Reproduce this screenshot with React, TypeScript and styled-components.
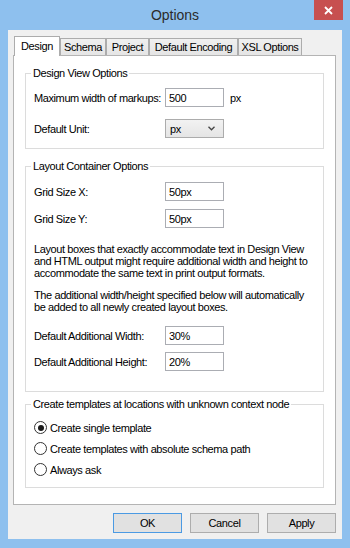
import styled, { createGlobalStyle } from 'styled-components'

const GlobalStyle = createGlobalStyle`
  body {
    margin: 0;
    background: #8ec0ee;
  }
  * {
    box-sizing: border-box;
  }
`

const FONT = `"Liberation Sans", Arial, sans-serif`

const Window = styled.div`
  width: 350px;
  height: 548px;
  display: flex;
  flex-direction: column;
  padding: 0 8px 9px;
  background: #8ec0ee;
  font-family: ${FONT};
  font-size: 11px;
  letter-spacing: -0.4px;
  color: #000;
`

const TitleBar = styled.div`
  height: 30px;
  display: grid;
  grid-template-columns: 1fr auto 1fr;
`

const Title = styled.div`
  grid-column: 2;
  font-size: 14px;
  letter-spacing: 0;
  line-height: 30px;
  color: #2b2b2b;
`

const CloseButton = styled.div`
  grid-column: 3;
  justify-self: end;
  width: 29px;
  height: 20px;
  margin-right: -1px;
  background: #c75050;
  display: flex;
  align-items: center;
  justify-content: center;
`

const Client = styled.div`
  flex: 1;
  display: flex;
  flex-direction: column;
  background: #f0f0f0;
  padding: 6px 6px 6px 5px;
`

const TabStrip = styled.div`
  display: flex;
  align-items: flex-end;
  height: 19px;
  padding-left: 1px;
  position: relative;
  z-index: 1;
`

const Tab = styled.div<{ $active?: boolean; $w: number }>`
  width: ${({ $w }) => $w}px;
  height: ${({ $active }) => ($active ? 20 : 17)}px;
  margin-bottom: ${({ $active }) => ($active ? -1 : 0)}px;
  padding-bottom: ${({ $active }) => ($active ? 2 : 0)}px;
  border: 1px solid #acacac;
  border-bottom: none;
  background: ${({ $active }) => ($active ? '#fff' : 'linear-gradient(#f0f0f0, #e5e5e5)')};
  display: flex;
  align-items: center;
  justify-content: center;
  white-space: nowrap;
`

const Panel = styled.div`
  flex: 1;
  display: flex;
  flex-direction: column;
  background: #fff;
  border: 1px solid #b4b4b4;
  padding: 11px 11px 0;
`

const Group = styled.fieldset<{ $top: number; $bottom: number; $gap?: number }>`
  margin: ${({ $gap }) => $gap ?? 0}px 0 0;
  min-width: 0;
  border: 1px solid #dcdcdc;
  padding: ${({ $top }) => $top}px 8px ${({ $bottom }) => $bottom}px;
`

const Legend = styled.legend`
  padding: 0 2px;
  margin-left: -3px;
  line-height: 13px;
`

// label | field | unit
const FieldRow = styled.div<{ $gap?: number }>`
  display: grid;
  grid-template-columns: 125px 59px auto;
  column-gap: 6px;
  align-items: center;
  margin-top: ${({ $gap }) => $gap ?? 0}px;
`

const Label = styled.span`
  white-space: nowrap;
`

const TextBox = styled.input`
  width: 59px;
  height: 19px;
  margin: 0;
  padding: 0 3px;
  border: 1px solid #abadb3;
  background: #fff;
  font: inherit;
  letter-spacing: inherit;
  color: #000;
  outline: none;
`

const Select = styled.div`
  width: 59px;
  height: 19px;
  border: 1px solid #acacac;
  background: linear-gradient(#f2f2f2, #e5e5e5);
  display: flex;
  align-items: center;
  justify-content: space-between;
  padding: 0 8px 0 4px;
`

const Para = styled.p<{ $gap: number }>`
  margin: ${({ $gap }) => $gap}px 0 0;
  line-height: 12px;
`

const RadioRow = styled.label<{ $gap?: number }>`
  display: flex;
  align-items: center;
  gap: 3px;
  height: 13px;
  margin-top: ${({ $gap }) => $gap ?? 0}px;
`

const RadioCircle = styled.span<{ $checked?: boolean }>`
  width: 13px;
  height: 13px;
  border-radius: 50%;
  border: 1px solid #333;
  background: #fff;
  display: flex;
  align-items: center;
  justify-content: center;

  &::after {
    content: '';
    width: 6px;
    height: 6px;
    border-radius: 50%;
    background: ${({ $checked }) => ($checked ? '#1a1a1a' : 'transparent')};
  }
`

const Footer = styled.div`
  display: flex;
  justify-content: flex-end;
  gap: 8px;
  margin-top: 8px;
`

const Button = styled.div<{ $default?: boolean }>`
  width: 69px;
  height: 20px;
  border: 1px solid ${({ $default }) => ($default ? '#4b9ae3' : '#adadad')};
  background: #e1e1e1;
  display: flex;
  align-items: center;
  justify-content: center;
`

const tabs = [
  { label: 'Design', w: 46 },
  { label: 'Schema', w: 46 },
  { label: 'Project', w: 43 },
  { label: 'Default Encoding', w: 89 },
  { label: 'XSL Options', w: 64 },
]

export default function App() {
  return (
    <>
      <GlobalStyle />
      <Window>
        <TitleBar>
          <Title>Options</Title>
          <CloseButton>
            <svg width="9" height="9" viewBox="0 0 9 9">
              <path d="M1 1 L8 8 M8 1 L1 8" stroke="#fff" strokeWidth="1.8" />
            </svg>
          </CloseButton>
        </TitleBar>
        <Client>
          <TabStrip>
            {tabs.map((t, i) => (
              <Tab key={t.label} $w={t.w} $active={i === 0}>
                {t.label}
              </Tab>
            ))}
          </TabStrip>
          <Panel>
            <Group $top={8} $bottom={10}>
              <Legend>Design View Options</Legend>
              <FieldRow>
                <Label>Maximum width of markups:</Label>
                <TextBox readOnly defaultValue="500" />
                <span>px</span>
              </FieldRow>
              <FieldRow $gap={12}>
                <Label>Default Unit:</Label>
                <Select>
                  <span>px</span>
                  <svg width="7" height="5" viewBox="0 0 7 5">
                    <path d="M0.5 0.8 L3.5 3.8 L6.5 0.8" fill="none" stroke="#444" strokeWidth="1.3" />
                  </svg>
                </Select>
              </FieldRow>
            </Group>

            <Group $top={9} $bottom={20} $gap={11}>
              <Legend>Layout Container Options</Legend>
              <FieldRow>
                <Label>Grid Size X:</Label>
                <TextBox readOnly defaultValue="50px" />
              </FieldRow>
              <FieldRow $gap={8}>
                <Label>Grid Size Y:</Label>
                <TextBox readOnly defaultValue="50px" />
              </FieldRow>
              <Para $gap={15}>
                Layout boxes that exactly accommodate text in Design View and HTML output might
                require additional width and height to accommodate the same text in print output
                formats.
              </Para>
              <Para $gap={10}>
                The additional width/height specified below will automatically be added to all
                newly created layout boxes.
              </Para>
              <FieldRow $gap={13}>
                <Label>Default Additional Width:</Label>
                <TextBox readOnly defaultValue="30%" />
              </FieldRow>
              <FieldRow $gap={7}>
                <Label>Default Additional Height:</Label>
                <TextBox readOnly defaultValue="20%" />
              </FieldRow>
            </Group>

            <Group $top={10} $bottom={11} $gap={6}>
              <Legend>Create templates at locations with unknown context node</Legend>
              <RadioRow>
                <RadioCircle $checked />
                Create single template
              </RadioRow>
              <RadioRow $gap={8}>
                <RadioCircle />
                Create templates with absolute schema path
              </RadioRow>
              <RadioRow $gap={8}>
                <RadioCircle />
                Always ask
              </RadioRow>
            </Group>
          </Panel>
          <Footer>
            <Button $default>OK</Button>
            <Button>Cancel</Button>
            <Button>Apply</Button>
          </Footer>
        </Client>
      </Window>
    </>
  )
}
